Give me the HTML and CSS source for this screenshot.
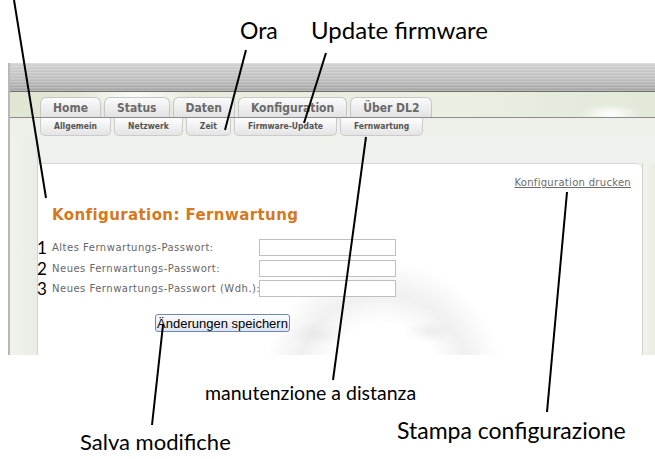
FILE: index.html
```html
<!DOCTYPE html>
<html>
	<head>
		<meta charset="utf-8" />
		<title>Konfiguration: Fernwartung</title>
		<link rel="stylesheet" href="styles.css">
	</head>

	<body>
		<div id="figure">
			<div class="shot">
				<div class="brand"></div>
				<div class="tabbar">
					<ul class="tabs">
						<li><a href="javascript:;">Home</a></li>
						<li><a href="javascript:;">Status</a></li>
						<li><a href="javascript:;">Daten</a></li>
						<li><a href="javascript:;">Konfiguration</a></li>
						<li><a href="javascript:;">Über DL2</a></li>
					</ul>
				</div>
				<div class="subbar">
					<ul class="subtabs">
						<li><a href="javascript:;">Allgemein</a></li>
						<li><a href="javascript:;">Netzwerk</a></li>
						<li><a href="javascript:;">Zeit</a></li>
						<li><a href="javascript:;">Firmware-Update</a></li>
						<li><a href="javascript:;">Fernwartung</a></li>
					</ul>
				</div>
				<div class="main">
					<div class="side"></div>
					<div class="panel">
						<div class="print"><a href="javascript:;">Konfiguration drucken</a></div>
						<h2>Konfiguration: Fernwartung</h2>
						<div class="form">
							<div class="row">
								<span class="num">1</span>
								<label>Altes Fernwartungs-Passwort:</label>
								<input type="password">
							</div>
							<div class="row">
								<span class="num">2</span>
								<label>Neues Fernwartungs-Passwort:</label>
								<input type="password">
							</div>
							<div class="row">
								<span class="num">3</span>
								<label>Neues Fernwartungs-Passwort (Wdh.):</label>
								<input type="password">
							</div>
						</div>
						<button class="save">Änderungen speichern</button>
					</div>
					<div class="side side-right"></div>
				</div>
			</div>

			<!-- Beschriftung -->
			<svg class="lines" width="655" height="459">
				<line x1="14" y1="0" x2="46" y2="198" />
				<line x1="246" y1="50" x2="225" y2="130" />
				<line x1="326" y1="53" x2="304" y2="123" />
				<line x1="366" y1="137" x2="333" y2="380" />
				<line x1="163" y1="325" x2="152" y2="425" />
				<line x1="567" y1="192" x2="547" y2="412" />
			</svg>
			<span class="note note-ora">Ora</span>
			<span class="note note-fw">Update firmware</span>
			<span class="note note-fern">manutenzione a distanza</span>
			<span class="note note-print">Stampa configurazione</span>
			<span class="note note-save">Salva modifiche</span>
		</div>
	</body>

</html>
```

FILE: styles.css
```css
body,
ul,
h2 {
	margin: 0;
	padding: 0;
}

body {
	background: #fff;
	font-family: "DejaVu Sans", Verdana, sans-serif;
}

li {
	list-style: none;
}

a {
	text-decoration: none;
}

#figure {
	position: relative;
	width: 655px;
	height: 459px;
	overflow: hidden;
}

/* Screenshot */
.shot {
	margin: 63px 0 0 8px;
	height: 292px;
	border-left: 2px solid #b8b8b8;
	display: flex;
	flex-direction: column;
	overflow: hidden;
}

.brand {
	height: 28px;
	border-bottom: 1px solid #6e6e6e;
	background:
		repeating-linear-gradient(180deg, rgba(255, 255, 255, 0.18) 0, rgba(255, 255, 255, 0.18) 1px, rgba(0, 0, 0, 0.04) 2px, rgba(0, 0, 0, 0) 3px),
		linear-gradient(180deg, #d4d4d4 0%, #c2c2c2 55%, #a7a7a7 100%);
}

.tabbar {
	height: 25px;
	border-bottom: 1px solid #8c8c8c;
	background:
		radial-gradient(ellipse 30px 10px at 600px 22px, #fff, rgba(255, 255, 255, 0)),
		radial-gradient(ellipse 60px 14px at 125px 4px, rgba(255, 255, 255, 0.9), rgba(255, 255, 255, 0)),
		linear-gradient(90deg, #dfe6d2 0%, #e8eddd 35%, #eaefe2 70%, #e2e9d8 100%);
	display: flex;
	align-items: flex-end;
}

.tabs {
	display: flex;
	gap: 3px;
	padding-left: 30px;
}

.tabs a {
	display: block;
	height: 20px;
	line-height: 21px;
	padding: 0 12px;
	box-sizing: border-box;
	border: 1px solid #c6c6c6;
	border-bottom: none;
	border-radius: 6px 6px 0 0;
	background: linear-gradient(180deg, #fbfbfb, #e2e2e2);
	font-family: "DejaVu Sans Condensed", "DejaVu Sans", sans-serif;
	font-weight: bold;
	font-size: 12px;
	color: #6a6a6a;
}

.subbar {
	height: 19px;
	background: #eef0ea;
}

.subtabs {
	display: flex;
	gap: 3px;
	padding-left: 30px;
}

.subtabs a {
	display: block;
	height: 18px;
	line-height: 16px;
	padding: 0 13px;
	box-sizing: border-box;
	border: 1px solid #cbcbcb;
	border-top: none;
	border-radius: 0 0 5px 5px;
	background: linear-gradient(180deg, #fdfdfd, #e4e4e4);
	font-family: "DejaVu Sans Condensed", "DejaVu Sans", sans-serif;
	font-weight: bold;
	font-size: 8.5px;
	color: #555;
}

.main {
	flex: 1;
	display: flex;
	background: #eff1ec;
}

.side {
	width: 27px;
	border-right: 1px solid #d3d3d3;
	background: linear-gradient(90deg, #f1f2ec, #e9ede6);
}

.side-right {
	width: 12px;
	border-right: none;
	margin-top: 26px;
	border-left: 1px solid #d0d0d0;
}

.panel {
	flex: 1;
	margin-top: 26px;
	padding: 10px 11px 0 14px;
	border-top: 1px solid #d8d8d8;
	border-top-right-radius: 6px;
	background:
		radial-gradient(circle at 345px 215px, rgba(255, 255, 255, 0) 55px, rgba(0, 0, 0, 0.06) 85px, rgba(255, 255, 255, 0) 120px),
		radial-gradient(ellipse 26px 10px at 390px 168px, rgba(0, 0, 0, 0.05), rgba(255, 255, 255, 0)),
		radial-gradient(ellipse 30px 12px at 280px 170px, rgba(0, 0, 0, 0.04), rgba(255, 255, 255, 0)),
		#fff;
}

.print {
	text-align: right;
	line-height: 14px;
}

.print a {
	font-size: 10px;
	letter-spacing: 0.3px;
	color: #6c6c6c;
	text-decoration: underline;
}

.panel h2 {
	margin-top: 16px;
	font-size: 15px;
	line-height: 18px;
	letter-spacing: 0.4px;
	color: #d6781d;
}

.form {
	margin-top: 15px;
	display: flex;
	flex-direction: column;
	gap: 3.5px;
}

.row {
	position: relative;
	display: flex;
	align-items: center;
	height: 17px;
}

.row label {
	width: 207px;
	font-size: 10px;
	letter-spacing: 0.5px;
	color: #666;
	white-space: nowrap;
}

.row input {
	width: 137px;
	height: 17px;
	box-sizing: border-box;
	margin: 0;
	border: 1px solid #bfbfbf;
	background: #fff;
}

.num {
	position: absolute;
	left: -15px;
	top: 1px;
	font-family: Lato, "Open Sans", sans-serif;
	font-size: 17px;
	line-height: 16px;
	color: #000;
}

.save {
	display: block;
	margin: 17px 0 0 103px;
	width: 135px;
	height: 18px;
	padding: 0;
	border: 1px solid #6f87b3;
	border-radius: 3px;
	background: linear-gradient(180deg, #fbfcff, #dfe4ef);
	font-family: "Liberation Sans", Arial, sans-serif;
	font-size: 13px;
	color: #000;
}

/* Beschriftung */
.lines {
	position: absolute;
	left: 0;
	top: 0;
	pointer-events: none;
}

.lines line {
	stroke: #000;
	stroke-width: 2;
}

.note {
	position: absolute;
	font-family: Lato, "Open Sans", sans-serif;
	line-height: 1;
	color: #000;
	white-space: nowrap;
}

.note-ora {
	left: 240px;
	top: 19px;
	font-size: 23px;
}

.note-fw {
	left: 311px;
	top: 18px;
	font-size: 24px;
}

.note-fern {
	left: 205px;
	top: 383px;
	font-size: 19.5px;
}

.note-print {
	left: 397px;
	top: 419px;
	font-size: 23px;
}

.note-save {
	left: 80px;
	top: 431px;
	font-size: 22px;
}
```
